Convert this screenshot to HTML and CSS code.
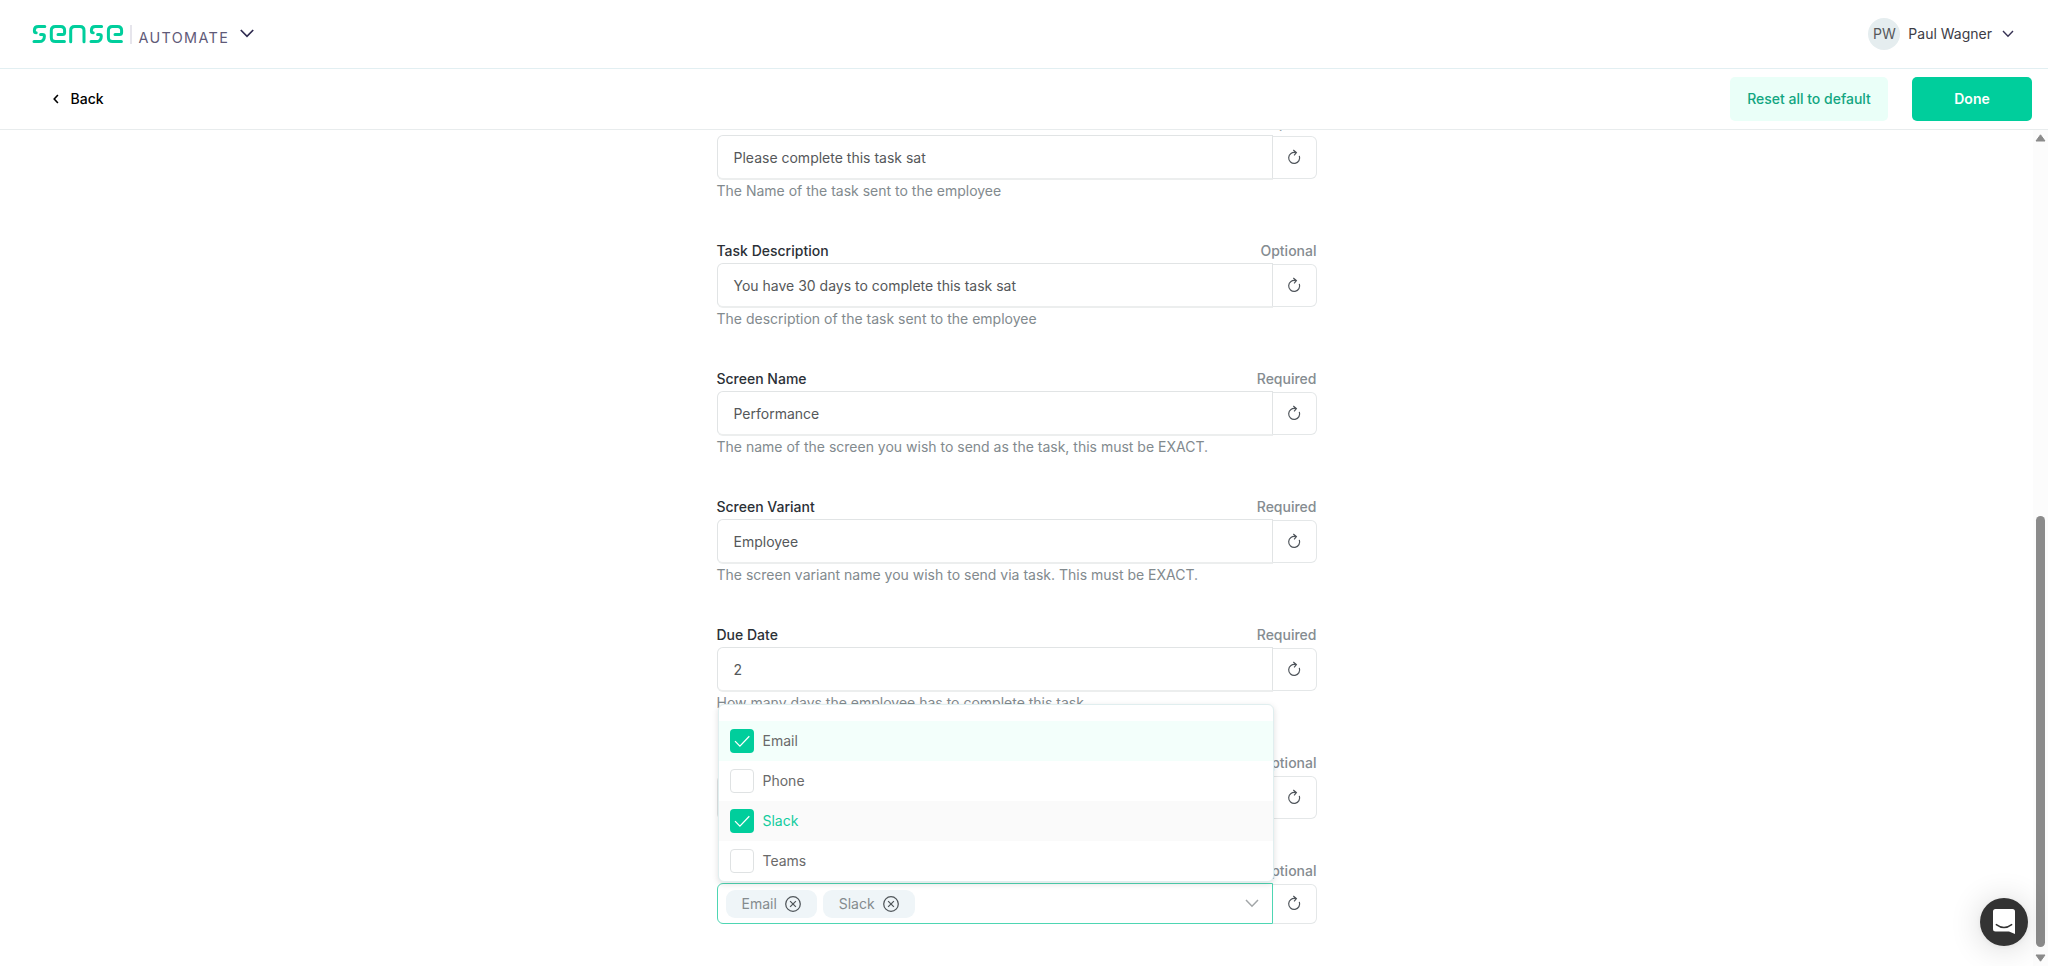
FILE: index.html
```html
<!DOCTYPE html>
<html lang="en">
<head>
<meta charset="utf-8">
<title>Sense Automate</title>
<link rel="stylesheet" href="styles.css">
</head>
<body>
<svg class="defs" width="0" height="0">
  <symbol id="redo" viewBox="0 0 14 16"><path d="M12.3 6.9A5.500 5.500 0 1 1 8.600 3.600M6.300 1l3.100 2.600-2.300 2.700" fill="none" stroke="#50565c" stroke-width="1.2"/></symbol>
  <symbol id="tick" viewBox="0 0 24 24"><path d="M5 12.1l4.9 5L19.3 7.3" fill="none" stroke="#fff" stroke-width="1.3"/></symbol>
  <symbol id="remove" viewBox="0 0 16 16"><g fill="none" stroke="#50565a" stroke-width="1.25"><circle cx="8" cy="8" r="7.3"/><path d="M5.1 5.1l5.8 5.8M10.9 5.1l-5.8 5.8"/></g></symbol>
</svg>
<header class="topbar">
  <div class="brand">
    <svg class="logo" width="92" height="20" viewBox="0 0 92 20" fill="none" stroke="#00ce9c" stroke-width="3" stroke-linecap="round" stroke-linejoin="round">
      <path d="M12.8 2.4H6.4Q2.4 2.4 2.4 6.2V7Q2.4 8.8 4.2 8.8M8.6 10.5H10.4Q12.4 10.5 12.4 12.2 12.4 17.6 7 17.6H2"/>
      <path d="M26 10.6H30.5Q32.6 10.6 32.6 8.6V6.4Q32.6 2.4 28.6 2.4H23.4Q19.3 2.4 19.3 6.4V13.6Q19.3 17.6 23.4 17.6H32.4"/>
      <path d="M38.7 17.8V6.4Q38.7 2.4 42.7 2.4H48Q52 2.4 52 6.4V17.8"/>
      <path d="M69.6 2.4H63.3Q59.4 2.4 59.4 6.2V7Q59.4 8.8 61.2 8.8M65.6 10.5H67.4Q69.3 10.5 69.3 12.2 69.3 17.6 64 17.6H59"/>
      <path d="M83 10.6H87.5Q89.6 10.6 89.6 8.6V6.4Q89.6 2.4 85.6 2.4H80.4Q76.4 2.4 76.4 6.4V13.6Q76.4 17.6 80.4 17.6H89.4"/>
    </svg>
    <span class="divider"></span>
    <span class="product">AUTOMATE</span>
    <svg class="product-arrow" width="14" height="9" viewBox="0 0 14 9"><path d="M.8 1l6.2 6.4L13.2 1" fill="none" stroke="#2f2b50" stroke-width="1.7"/></svg>
  </div>
  <div class="account">
    <span class="avatar">PW</span>
    <span class="username">Paul Wagner</span>
    <svg class="account-arrow" width="12" height="8" viewBox="0 0 12 8"><path d="M1 1l5 5.2L11 1" fill="none" stroke="#373254" stroke-width="1.4"/></svg>
  </div>
</header>
<nav class="actions">
  <a class="back"><svg width="6" height="10" viewBox="0 0 6 10"><path d="M4.9 1L1.2 5l3.7 4" fill="none" stroke="#000" stroke-width="1.6"/></svg>Back</a>
  <div class="buttons"><button class="reset-all">Reset all to default</button><button class="done">Done</button></div>
</nav>
<div class="viewport">
  <main class="scroller">
    <form class="form">
      <section class="field">
        <div class="head"><label>Task Name</label><span class="need">Required</span></div>
        <div class="control"><div class="input">Please complete this task sat</div><div class="reset"><svg><use href="#redo"/></svg></div></div>
        <p class="help">The Name of the task sent to the employee</p>
      </section>
      <section class="field">
        <div class="head"><label>Task Description</label><span class="need">Optional</span></div>
        <div class="control"><div class="input">You have 30 days to complete this task sat</div><div class="reset"><svg><use href="#redo"/></svg></div></div>
        <p class="help">The description of the task sent to the employee</p>
      </section>
      <section class="field">
        <div class="head"><label>Screen Name</label><span class="need">Required</span></div>
        <div class="control"><div class="input">Performance</div><div class="reset"><svg><use href="#redo"/></svg></div></div>
        <p class="help">The name of the screen you wish to send as the task, this must be EXACT.</p>
      </section>
      <section class="field">
        <div class="head"><label>Screen Variant</label><span class="need">Required</span></div>
        <div class="control"><div class="input">Employee</div><div class="reset"><svg><use href="#redo"/></svg></div></div>
        <p class="help">The screen variant name you wish to send via task. This must be EXACT.</p>
      </section>
      <section class="field">
        <div class="head"><label>Due Date</label><span class="need">Required</span></div>
        <div class="control"><div class="input">2</div><div class="reset"><svg><use href="#redo"/></svg></div></div>
        <p class="help">How many days the employee has to complete this task</p>
      </section>
      <section class="field field-short">
        <div class="head"><span class="need">Optional</span></div>
        <div class="control"><div class="input"></div><div class="reset"><svg><use href="#redo"/></svg></div></div>
      </section>
      <section class="field">
        <div class="head"><span class="need">Optional</span></div>
        <div class="control control-select">
          <div class="select">
            <span class="chip">Email<svg><use href="#remove"/></svg></span>
            <span class="chip">Slack<svg><use href="#remove"/></svg></span>
            <svg class="select-arrow" width="14" height="9" viewBox="0 0 14 9"><path d="M1 1l6 6.2L13 1" fill="none" stroke="#a2a6a8" stroke-width="1.5"/></svg>
          </div>
          <div class="reset"><svg><use href="#redo"/></svg></div>
          <div class="menu">
            <div class="option option-active"><span class="box box-on"><svg><use href="#tick"/></svg></span>Email</div>
            <div class="option"><span class="box"></span>Phone</div>
            <div class="option option-hover"><span class="box box-on"><svg><use href="#tick"/></svg></span>Slack</div>
            <div class="option"><span class="box"></span>Teams</div>
          </div>
        </div>
      </section>
    </form>
  </main>
  <aside class="scrollbar">
    <svg width="11" height="8" viewBox="0 0 11 8"><path d="M5.5 .8L10 7H1z" fill="#8b8b8b" stroke="#8b8b8b" stroke-linejoin="round"/></svg>
    <span class="thumb"></span>
    <svg width="11" height="8" viewBox="0 0 11 8"><path d="M5.5 7.2L10 1H1z" fill="#8b8b8b" stroke="#8b8b8b" stroke-linejoin="round"/></svg>
  </aside>
</div>
<button class="chat"><svg width="22" height="25" viewBox="0 0 22 25"><path d="M2.5 0h17Q22 0 22 2.5V25l-6-2.6H2.5Q0 22.400 0 19.900V2.500Q0 0 2.500 0z" fill="#fff"/><path d="M3.300 15.600Q11 21.400 18.700 15.600" fill="none" stroke="#333" stroke-width="1.400" stroke-linecap="round"/></svg></button>
</body>
</html>
```
FILE: styles.css
```css
* { box-sizing: border-box; }
body {
  margin: 0;
  height: 966px;
  display: flex;
  flex-direction: column;
  overflow: hidden;
  background: #fff;
  color: #55585a;
  font: 14px/22px Inter, "Liberation Sans", sans-serif;
}
button { border: 0; padding: 0; font: inherit; }
.defs { position: absolute; }

.topbar {
  flex: none;
  height: 69px;
  border-bottom: 1px solid #e2eff2;
  display: flex;
  justify-content: space-between;
  padding: 0 34px 0 32px;
}
.brand { display: flex; align-items: flex-start; padding-top: 24px; }
.divider { width: 2px; height: 19px; margin: 1px 7px 0 6px; background: #e6e5ec; }
.product { font-size: 14.400px; letter-spacing: 1.350px; color: #5f5a78; line-height: 20px; margin: 4px 0 0 -.5px; }
.product-arrow { margin: 5px 0 0 11px; }
.account { display: flex; align-items: flex-start; padding-top: 18px; }
.avatar { width: 32px; height: 32px; border-radius: 50%; background: #e5edef; text-align: center; line-height: 32px; }
.username { margin-left: 8px; line-height: 31px; color: #3c3c46; }
.account-arrow { margin: 12px 0 0 10px; }

.actions {
  flex: none;
  height: 61px;
  border-bottom: 1px solid #e8eced;
  display: flex;
  justify-content: space-between;
  align-items: center;
  padding: 0 16px 0 52.500px;
}
.back { display: flex; align-items: center; gap: 12px; color: #000; font-weight: 500; }
.buttons { display: flex; gap: 24px; }
.reset-all, .done { height: 44px; border-radius: 5px; font-weight: 500; }
.reset-all { width: 158px; background: #eafff8; color: #12a681; }
.done { width: 120px; background: #00ce9c; color: #fff; font-weight: 600; }

.viewport { flex: 1; min-height: 0; display: flex; }
.scroller { flex: 1; overflow: hidden; display: flex; justify-content: center; align-items: flex-start; }
.form { width: 600px; margin-top: -19px; flex: none; }
.field { height: 128px; }
.field-short { height: 108px; }
.head { display: flex; line-height: 24px; height: 24px; color: #2b3036; font-weight: 500; }
.need { margin-left: auto; color: #858c91; }
.control { display: flex; height: 45px; }
.input {
  width: 556px;
  border: 1px solid #e1e4e5;
  border-bottom: 2px solid #eceeee;
  border-radius: 6px 0 0 6px;
  padding-left: 16px;
  line-height: 44px;
}
.reset {
  flex: 1;
  margin: 1px 0;
  border: 1px solid #e4e7e8;
  border-left: 0;
  border-radius: 0 6px 6px 0;
  display: flex;
  justify-content: center;
  align-items: center;
}
.reset svg { width: 14px; height: 16px; margin: -1px 1px 0 0; }
.help { margin: 0; color: #828a8e; }

.control-select { height: 41px; position: relative; }
.control-select .reset { margin-bottom: 0; }
.control-select .reset svg { margin-top: -3px; }
.select {
  width: 556px;
  border: 1px solid #4ed6b3;
  border-radius: 6px 0 0 6px;
  display: flex;
  align-items: center;
  gap: 5.500px;
  padding: 0 13px 0 8px;
}
.chip {
  height: 28px;
  border-radius: 9px;
  background: #eff5f8;
  color: #858b8e;
  display: flex;
  align-items: center;
  gap: 8.400px;
  padding: 0 16px;
}
.chip svg { width: 16px; height: 16px; }
.select-arrow { margin-left: auto; }
.menu {
  position: absolute;
  left: 1px;
  bottom: 42px;
  width: 556px;
  height: 178px;
  padding-top: 16px;
  background: #fff;
  border: 1px solid #e0eeef;
  border-radius: 6px;
  overflow: hidden;
  box-shadow: 0 2px 6px rgba(0, 0, 0, .13);
}
.option { height: 40px; display: flex; align-items: center; gap: 9px; padding-left: 11px; color: #6a6a6a; }
.option-active { background: #f3fffb; }
.option-hover { background: #fafafa; color: #12cc9e; }
.box { width: 24px; height: 24px; border: 1px solid #dfe2e3; border-radius: 4px; }
.box-on { border: 0; background: #00ce9c; }
.box svg { display: block; width: 24px; height: 24px; }

.scrollbar { width: 15px; background: #fcfcfc; display: flex; flex-direction: column; align-items: center; padding: 4px 0; }
.thumb { width: 9px; height: 431px; margin: 374px 0 7px; border-radius: 5px; background: #8b8b8b; }
.chat {
  position: fixed;
  right: 20px;
  bottom: 20.500px;
  width: 48px;
  height: 48px;
  border-radius: 50%;
  background: #333;
  display: flex;
  align-items: center;
  justify-content: center;
  box-shadow: 0 1px 6px rgba(0, 0, 0, .06), 0 2px 32px rgba(0, 0, 0, .16);
}
```
